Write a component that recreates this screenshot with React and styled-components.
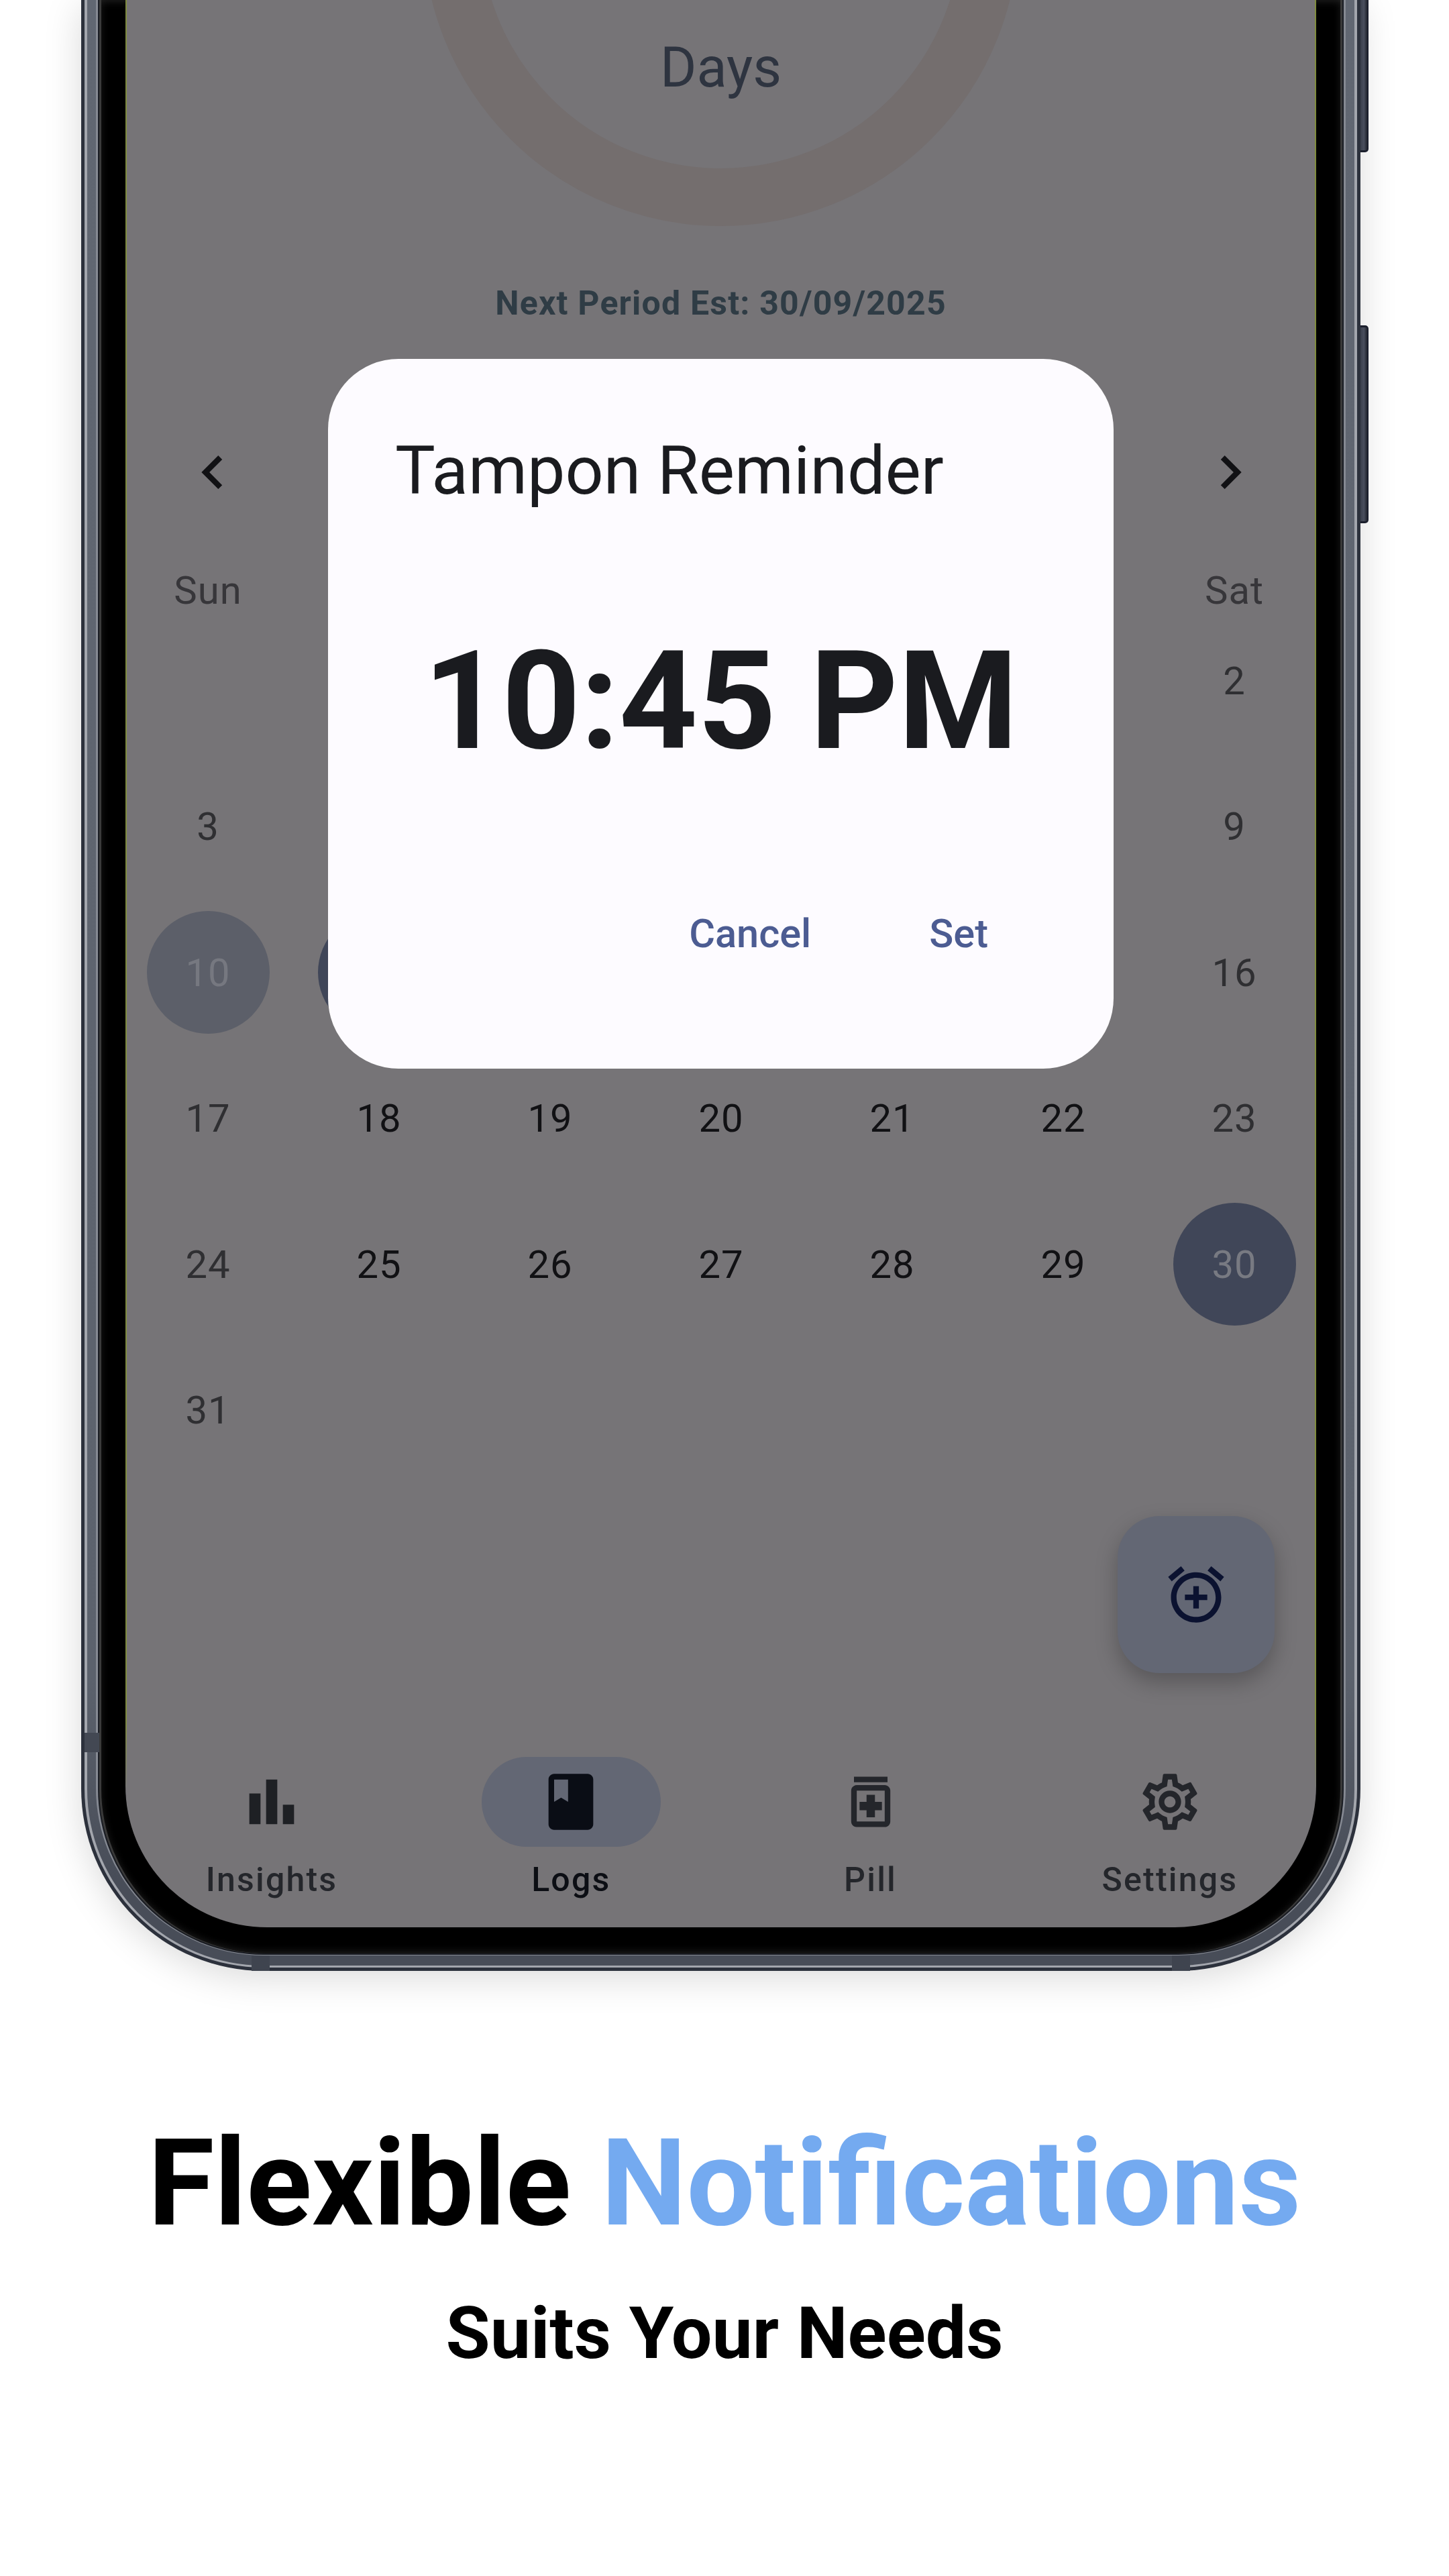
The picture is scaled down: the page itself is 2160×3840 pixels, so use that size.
import React from "react";
import styled, { createGlobalStyle } from "styled-components";
import { MdOutlineSettings, MdChevronLeft, MdChevronRight } from "react-icons/md";

const Global = createGlobalStyle`
  html, body { margin: 0; padding: 0; background: #fff; }
  body { font-family: Roboto, "Liberation Sans", sans-serif; }
`;

const Page = styled.div`
  width: 2160px;
  height: 3840px;
  background: #fff;
  overflow: hidden;
  display: flex;
  flex-direction: column;
`;

const Shell = styled.div`
  position: relative;
  flex: none;
  margin-left: 121px;
  width: 1907px;
  height: 2938px;
  box-sizing: border-box;
  padding: 0 5px 5px;
  background: #2c313c;
  border-radius: 0 0 272px 272px;
  box-shadow: 0 10px 55px rgba(0, 0, 0, 0.15);
`;
const Rim = styled.div`
  height: 100%;
  box-sizing: border-box;
  padding: 0 4px 3px;
  background: #a3a6ad;
  border-radius: 0 0 267px 267px;
`;
const Metal = styled.div`
  height: 100%;
  box-sizing: border-box;
  padding: 0 13px 15px;
  background: linear-gradient(#616772 0, #5c626d 2500px, #484d58 2800px);
  border-radius: 0 0 263px 263px;
`;
const Glint = styled.div`
  height: 100%;
  box-sizing: border-box;
  padding: 0 3px 1px;
  background: #858992;
  border-radius: 0 0 250px 250px;
`;
const InnerEdge = styled.div`
  height: 100%;
  box-sizing: border-box;
  padding: 0 2px 2px;
  background: #1a1d24;
  border-radius: 0 0 247px 247px;
`;
const Bezel = styled.div`
  height: 100%;
  box-sizing: border-box;
  padding: 0 39px 39px;
  background: #000;
  border-radius: 0 0 245px 245px;
  box-shadow: inset 3px 0 0 #3a3a3a, inset -3px 0 0 #3a3a3a, inset 0 0 14px #2a2a2a;
`;

const SideButton = styled.div`
  position: absolute;
  left: 100%;
  top: ${(p) => p.$top}px;
  width: 12px;
  height: ${(p) => p.$height}px;
  box-sizing: border-box;
  background: linear-gradient(90deg, #3a3f4c, #4a4f5e 50%, #22262f);
  border-right: 2px solid #1a1e2c;
  border-bottom: 3px solid #1a1e2c;
  border-top: 3px solid #1a1e2c;
  border-radius: 0 5px 5px 0;
`;
const LeftBand = styled.div`
  position: absolute;
  left: 5px;
  top: 2583px;
  width: 22px;
  height: 29px;
  background: #434853;
`;
const BottomBand = styled.div`
  position: absolute;
  bottom: 0;
  left: ${(p) => p.$left}px;
  width: 27px;
  height: 23px;
  background: #3f444f;
`;

const Screen = styled.div`
  position: relative;
  height: 100%;
  box-sizing: border-box;
  overflow: hidden;
  display: flex;
  flex-direction: column;
  padding: 0 2px;
  background: #767477;
  border-radius: 0 0 211px 211px;
  &::before, &::after {
    content: "";
    position: absolute;
    top: 0;
    width: 2px;
    height: 2670px;
    background: linear-gradient(#7f8b3e 2560px, rgba(127, 139, 62, 0));
  }
  &::before { left: 0; }
  &::after { right: 0; }
`;

const RingBlock = styled.div`
  position: relative;
  height: 337px;
  flex: none;
  display: flex;
  justify-content: center;
`;
const RingSvg = styled.svg`
  position: absolute;
  left: 0;
  top: 0;
`;
const DaysLabel = styled.div`
  position: relative;
  margin-top: 52px;
  height: 98px;
  line-height: 98px;
  font-size: 83px;
  color: #2e3440;
`;
const NextPeriod = styled.div`
  flex: none;
  margin-top: 80px;
  height: 70px;
  line-height: 70px;
  text-align: center;
  font-size: 50px;
  font-weight: 700;
  letter-spacing: 1.2px;
  color: #2f3c45;
`;
const MonthBar = styled.div`
  flex: none;
  margin-top: 167px;
  height: 100px;
  padding: 0 76px 0 78px;
  display: flex;
  justify-content: space-between;
  color: #111114;
  svg { display: block; }
`;

const DayGridBase = styled.div`
  flex: none;
  margin-left: 29.5px;
  display: grid;
  grid-template-columns: repeat(7, 183px);
  column-gap: 72px;
`;
const WeekRow = styled(DayGridBase)`
  margin-top: 93px;
  height: 66px;
`;
const WeekLabel = styled.div`
  text-align: center;
  font-size: 58px;
  line-height: 66px;
  letter-spacing: 1px;
  color: #37363a;
`;
const MonthGrid = styled(DayGridBase)`
  margin-top: 10px;
  grid-auto-rows: 183px;
  row-gap: 34.5px;
`;
const DayCell = styled.div`
  display: flex;
  align-items: center;
  justify-content: center;
  border-radius: 50%;
  font-size: 58px;
  letter-spacing: 1px;
  color: ${(p) => (p.$weekend ? "#2f2f32" : "#111114")};
  ${(p) => p.$mark && `background: ${p.$mark}; color: ${p.$ink};`}
`;

const Fab = styled.div`
  position: absolute;
  left: 1479px;
  top: 2260px;
  width: 234px;
  height: 234px;
  border-radius: 62px;
  background: #636774;
  box-shadow: 0 14px 32px rgba(0, 0, 0, 0.25);
  display: flex;
  align-items: center;
  justify-content: center;
`;

const Nav = styled.div`
  margin-top: auto;
  flex: none;
  height: 254px;
  padding-left: 82.5px;
  display: grid;
  grid-template-columns: repeat(4, 267px);
  column-gap: 179.3px;
`;
const NavItem = styled.div`
  display: flex;
  flex-direction: column;
  align-items: center;
`;
const NavIconWrap = styled.div`
  width: 267px;
  height: 134px;
  border-radius: 67px;
  background: ${(p) => (p.$active ? "#636774" : "transparent")};
  display: flex;
  align-items: center;
  justify-content: center;
  svg { display: block; }
`;
const NavLabel = styled.div`
  margin-top: 18px;
  line-height: 62px;
  font-size: 50px;
  letter-spacing: 2.2px;
  font-weight: 500;
  color: ${(p) => (p.$active ? "#0c0e14" : "#24262b")};
`;

const Dialog = styled.div`
  position: absolute;
  left: 302px;
  top: 535px;
  width: 1171px;
  height: 1058px;
  box-sizing: border-box;
  padding: 107px 100px 0;
  border-radius: 105px;
  background: #fdfbff;
  display: flex;
  flex-direction: column;
  color: #1a1b1f;
`;
const DialogTitle = styled.div`
  font-size: 100.4px;
  line-height: 120px;
`;
const TimeText = styled.div`
  margin-top: 159px;
  text-align: center;
  font-size: 204px;
  line-height: 250px;
  font-weight: 700;
`;
const DialogActions = styled.div`
  margin-top: 186px;
  display: flex;
  justify-content: flex-end;
  gap: 176px;
  padding-right: 187px;
  margin-right: -100px;
  font-size: 59.5px;
  line-height: 70px;
  font-weight: 500;
  color: #4c5c92;
`;

const Caption = styled.div`
  flex: 1;
  display: flex;
  flex-direction: column;
  align-items: center;
`;
const Headline = styled.div`
  margin-top: 203px;
  font-size: 180.5px;
  line-height: 228px;
  font-weight: 700;
  color: #000;
  white-space: nowrap;
`;
const Accent = styled.span`
  color: #74aaf0;
`;
const Subline = styled.div`
  margin-top: 44px;
  font-size: 107.5px;
  line-height: 130px;
  font-weight: 700;
  color: #000;
`;

const Path = ({ size = 100, fill, d }) => (
  <svg width={size} height={size} viewBox="0 0 24 24" fill={fill}>
    <path d={d} />
  </svg>
);

const BAR = "M4 9h4v11H4zm12 4h4v7h-4zm-6-9h4v16h-4z";
const BOOK = "M18 2H6c-1.1 0-2 .9-2 2v16c0 1.1.9 2 2 2h12c1.1 0 2-.9 2-2V4c0-1.1-.9-2-2-2zM6 4h5v8l-2.5-1.5L6 12V4z";
const PILL = "M6 3h12v2H6zm11 3H7c-1.1 0-2 .9-2 2v11c0 1.1.9 2 2 2h10c1.1 0 2-.9 2-2V8c0-1.1-.9-2-2-2zm0 13H7V8h10v11zM10.5 17.5h3V15H16v-3h-2.5V9.5h-3V12H8v3h2.5z";
const ALARM = "M7.88 3.39L6.6 1.86 2 5.71l1.29 1.53 4.59-3.85zM22 5.72l-4.6-3.86-1.29 1.53 4.6 3.86L22 5.72zM12 4c-4.97 0-9 4.03-9 9s4.02 9 9 9c4.97 0 9-4.03 9-9s-4.03-9-9-9zm0 16c-3.87 0-7-3.13-7-7s3.13-7 7-7 7 3.13 7 7-3.13 7-7 7zm1-11h-2v3H8v2h3v3h2v-3h3v-2h-3V9z";

// Aug 2025 grid; dates under the dialog are not visible and stay blank.
const weeks = [
  ["", "", "", "", "", "", "2"],
  ["3", "", "", "", "", "", "9"],
  ["10", "", "", "", "", "", "16"],
  ["17", "18", "19", "20", "21", "22", "23"],
  ["24", "25", "26", "27", "28", "29", "30"],
  ["31", "", "", "", "", "", ""],
];
const marks = {
  "10": { bg: "#5c5f69", ink: "#767880" },
  "30": { bg: "#404658", ink: "#787a82" },
};

export default function App() {
  return (
    <Page>
      <Global />
      <Shell>
        <SideButton $top={-40} $height={267} />
        <SideButton $top={485} $height={295} />
        <LeftBand />
        <BottomBand $left={254} />
        <BottomBand $left={1626} />
        <Rim>
          <Metal>
            <Glint>
              <InnerEdge>
                <Bezel>
                  <Screen>
                    <RingBlock>
                      <RingSvg width="1771" height="337" viewBox="0 0 1771 337">
                        <circle cx="885.5" cy="-107" r="401" fill="none" stroke="#746e6e" strokeWidth="86" />
                      </RingSvg>
                      <DaysLabel>Days</DaysLabel>
                    </RingBlock>
                    <NextPeriod>Next Period Est: 30/09/2025</NextPeriod>
                    <MonthBar>
                      <MdChevronLeft size={100} />
                      <MdChevronRight size={100} />
                    </MonthBar>
                    <WeekRow>
                      <WeekLabel>Sun</WeekLabel>
                      <span />
                      <span />
                      <span />
                      <span />
                      <span />
                      <WeekLabel>Sat</WeekLabel>
                    </WeekRow>
                    <MonthGrid>
                      {weeks.flatMap((week, w) =>
                        week.map((day, i) => (
                          <DayCell
                            key={`${w}-${i}`}
                            $weekend={i === 0 || i === 6}
                            $mark={w === 2 && i === 1 ? "#404658" : marks[day]?.bg}
                            $ink={marks[day]?.ink}
                          >
                            {day}
                          </DayCell>
                        ))
                      )}
                    </MonthGrid>
                    <Fab>
                      <Path fill="#0b1230" d={ALARM} />
                    </Fab>
                    <Nav>
                      <NavItem>
                        <NavIconWrap><Path fill="#1e2024" d={BAR} /></NavIconWrap>
                        <NavLabel>Insights</NavLabel>
                      </NavItem>
                      <NavItem>
                        <NavIconWrap $active><Path fill="#0a0d15" d={BOOK} /></NavIconWrap>
                        <NavLabel $active>Logs</NavLabel>
                      </NavItem>
                      <NavItem>
                        <NavIconWrap><Path fill="#24262b" d={PILL} /></NavIconWrap>
                        <NavLabel>Pill</NavLabel>
                      </NavItem>
                      <NavItem>
                        <NavIconWrap><MdOutlineSettings size={100} color="#24262b" /></NavIconWrap>
                        <NavLabel>Settings</NavLabel>
                      </NavItem>
                    </Nav>
                    <Dialog>
                      <DialogTitle>Tampon Reminder</DialogTitle>
                      <TimeText>10:45 PM</TimeText>
                      <DialogActions>
                        <span>Cancel</span>
                        <span>Set</span>
                      </DialogActions>
                    </Dialog>
                  </Screen>
                </Bezel>
              </InnerEdge>
            </Glint>
          </Metal>
        </Rim>
      </Shell>
      <Caption>
        <Headline>Flexible <Accent>Notifications</Accent></Headline>
        <Subline>Suits Your Needs</Subline>
      </Caption>
    </Page>
  );
}
